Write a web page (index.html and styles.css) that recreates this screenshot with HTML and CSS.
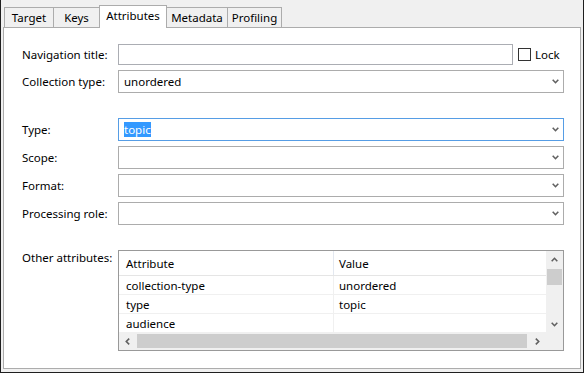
FILE: index.html
```html
<!DOCTYPE html>
<html>
<head>
<meta charset="utf-8">
<link rel="stylesheet" href="styles.css">
</head>
<body>
<div class="window">
  <div class="tabs">
    <div class="tab t-target">Target</div>
    <div class="tab t-keys">Keys</div>
    <div class="tab active t-attr">Attributes</div>
    <div class="tab t-meta">Metadata</div>
    <div class="tab t-prof">Profiling</div>
  </div>
  <div class="panel">
    <div class="row">
      <span class="lbl">Navigation title:</span>
      <div class="textbox"></div>
      <div class="lock"><span class="check"></span><span>Lock</span></div>
    </div>
    <div class="row mt5">
      <span class="lbl">Collection type:</span>
      <div class="combo"><span>unordered</span><svg class="chev" viewBox="0 0 7 5"><polyline points="0.7,0.8 3.5,3.7 6.3,0.8"/></svg></div>
    </div>
    <div class="row mt25">
      <span class="lbl">Type:</span>
      <div class="combo focus"><span class="sel">topic</span><svg class="chev" viewBox="0 0 7 5"><polyline points="0.7,0.8 3.5,3.7 6.3,0.8"/></svg></div>
    </div>
    <div class="row mt5">
      <span class="lbl">Scope:</span>
      <div class="combo"><span></span><svg class="chev" viewBox="0 0 7 5"><polyline points="0.7,0.8 3.5,3.7 6.3,0.8"/></svg></div>
    </div>
    <div class="row mt5">
      <span class="lbl">Format:</span>
      <div class="combo"><span></span><svg class="chev" viewBox="0 0 7 5"><polyline points="0.7,0.8 3.5,3.7 6.3,0.8"/></svg></div>
    </div>
    <div class="row mt5">
      <span class="lbl">Processing role:</span>
      <div class="combo"><span></span><svg class="chev" viewBox="0 0 7 5"><polyline points="0.7,0.8 3.5,3.7 6.3,0.8"/></svg></div>
    </div>
    <div class="row other">
      <span class="lbl">Other attributes:</span>
      <div class="table">
        <div class="list">
          <div class="trow hdr"><div class="c1">Attribute</div><div class="c2">Value</div></div>
          <div class="trow"><div class="c1">collection-type</div><div class="c2">unordered</div></div>
          <div class="trow"><div class="c1">type</div><div class="c2">topic</div></div>
          <div class="trow"><div class="c1">audience</div><div class="c2"></div></div>
        </div>
        <div class="vscroll">
          <div class="arrow"><svg class="sarr" viewBox="0 0 7 5"><polyline points="0.7,4.2 3.5,1.3 6.3,4.2"/></svg></div>
          <div class="vthumb"></div>
          <div class="fill"></div>
          <div class="arrow"><svg class="sarr" viewBox="0 0 7 5"><polyline points="0.7,0.8 3.5,3.7 6.3,0.8"/></svg></div>
        </div>
        <div class="hscroll">
          <div class="arrow"><svg class="sarr h" viewBox="0 0 5 7"><polyline points="4.2,0.7 1.3,3.5 4.2,6.3"/></svg></div>
          <div class="hthumb"></div>
          <div class="fill"></div>
          <div class="arrow"><svg class="sarr h" viewBox="0 0 5 7"><polyline points="0.8,0.7 3.7,3.5 0.8,6.3"/></svg></div>
        </div>
        <div class="corner"></div>
      </div>
    </div>
  </div>
</div>
</body>
</html>
```
FILE: styles.css
```css
body {
  margin: 0;
  background: #f0f0f0;
  font-family: "Noto Sans", sans-serif;
  font-size: 11.5px;
  color: #000;
}
.window {
  width: 584px;
  height: 373px;
  box-sizing: border-box;
  border: 1px solid #1f1f1f;
  border-top: 0;
  padding: 0 2px 3px;
  display: flex;
  flex-direction: column;
}
.tabs {
  height: 27px;
  flex: none;
  display: flex;
  align-items: flex-end;
  padding-left: 1px;
  position: relative;
  z-index: 1;
}
.tab {
  box-sizing: border-box;
  height: 20px;
  border: 1px solid #acacac;
  border-bottom: 0;
  margin-left: -1px;
  display: flex;
  align-items: center;
  justify-content: center;
  background: #f0f0f0;
  line-height: 14px;
}
.tab:first-child { margin-left: 0; }
.tab.active {
  height: 23px;
  margin-bottom: -1px;
  background: #fff;
  padding-bottom: 2px;
  position: relative;
  z-index: 2;
}
.t-target { width: 50px; }
.t-keys { width: 47px; }
.t-attr { width: 68px; }
.t-meta { width: 62px; }
.t-prof { width: 55px; }
.panel {
  height: 342px;
  box-sizing: border-box;
  border: 1px solid #acacac;
  background: #fff;
  padding: 16px 16px 0 18px;
  display: flex;
  flex-direction: column;
}
.row {
  display: flex;
  align-items: center;
}
.mt5 { margin-top: 5px; }
.mt25 { margin-top: 25px; }
.lbl {
  width: 96px;
  flex: none;
  line-height: 16px;
}
.textbox {
  flex: 1;
  height: 21px;
  box-sizing: border-box;
  border: 1px solid #abadb3;
}
.lock {
  width: 46px;
  flex: none;
  margin-left: 5px;
  display: flex;
  align-items: center;
  gap: 4px;
}
.check {
  width: 13px;
  height: 13px;
  box-sizing: border-box;
  border: 1px solid #333;
}
.combo {
  flex: 1;
  height: 23px;
  box-sizing: border-box;
  border: 1px solid #acacac;
  display: flex;
  align-items: center;
  justify-content: space-between;
  padding: 0 4px 0 5px;
}
.combo.focus { border-color: #569de5; }
.sel {
  background: #3399ff;
  color: #fff;
  line-height: 15px;
}
.chev {
  width: 7px;
  height: 5px;
  fill: none;
  stroke: #606060;
  stroke-width: 1.6;
}
.other {
  align-items: flex-start;
  margin-top: 25px;
}
.table {
  flex: 1;
  height: 101px;
  box-sizing: border-box;
  border: 1px solid #999;
  display: grid;
  grid-template-columns: 1fr 17px;
  grid-template-rows: 1fr 17px;
}
.list { overflow: hidden; }
.trow {
  display: grid;
  grid-template-columns: 215px 1fr;
  height: 19px;
  box-sizing: border-box;
  border-bottom: 1px solid #f0f0f0;
}
.trow.hdr {
  height: 25px;
  border-bottom-color: #e5e5e5;
}
.c1, .c2 {
  display: flex;
  align-items: center;
  white-space: nowrap;
}
.c1 {
  padding-left: 7px;
  border-right: 1px solid #f0f0f0;
}
.hdr .c1 { border-right-color: #e3e8f0; }
.c2 { padding-left: 5px; }
.vscroll {
  background: #f0f0f0;
  display: flex;
  flex-direction: column;
}
.hscroll {
  background: #f0f0f0;
  display: flex;
}
.corner { background: #f0f0f0; }
.arrow {
  width: 17px;
  height: 17px;
  flex: none;
  display: flex;
  align-items: center;
  justify-content: center;
}
.fill { flex: 1; }
.vthumb {
  height: 16px;
  margin: 1px 1px 0;
  background: #cdcdcd;
}
.hthumb {
  width: 390px;
  margin: 1px 0 2px 1px;
  background: #cdcdcd;
}
.sarr {
  width: 7px;
  height: 5px;
  fill: none;
  stroke: #606060;
  stroke-width: 1.6;
}
.sarr.h {
  width: 5px;
  height: 7px;
}
```
